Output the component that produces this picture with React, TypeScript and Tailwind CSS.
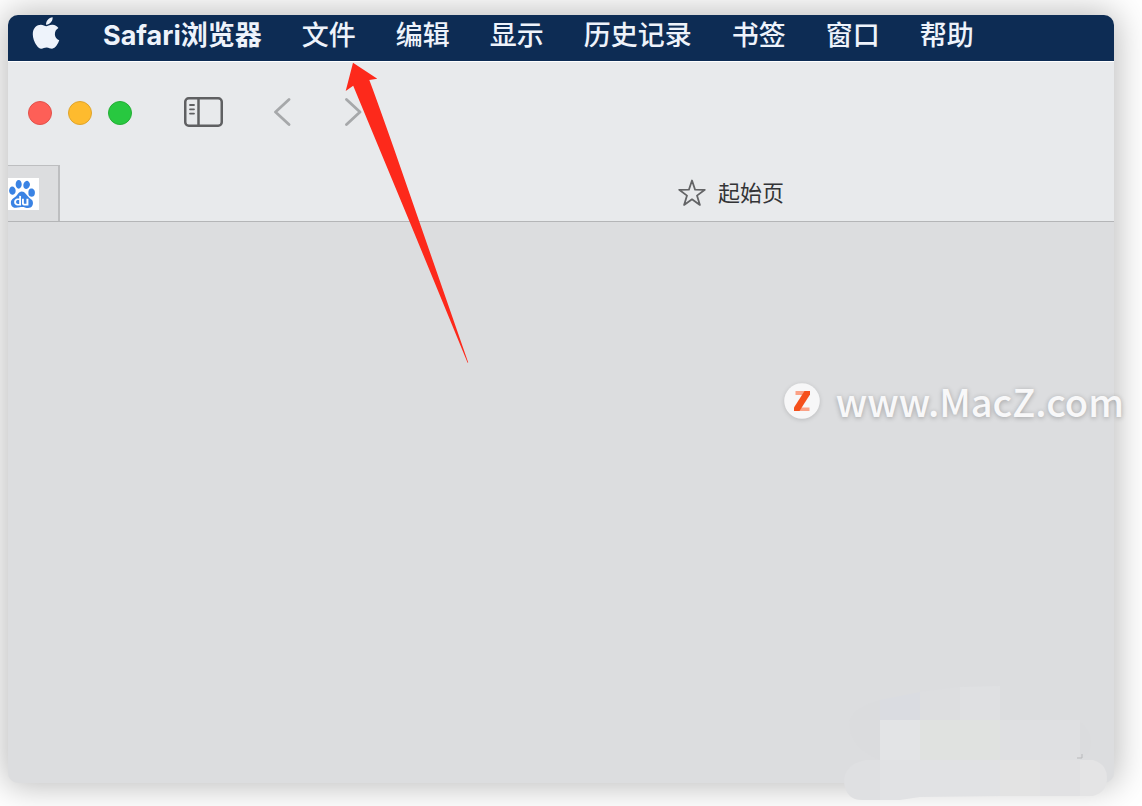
import React from "react";
import { FaApple } from "react-icons/fa";
import { SiBaidu } from "react-icons/si";

const menus = ["文件", "编辑", "显示", "历史记录", "书签", "窗口", "帮助"];

const MenuBar = () => {
    return (
        <nav className="flex h-[46px] shrink-0 items-start gap-10 overflow-hidden rounded-t-[10px] bg-[#0d2c54] pl-5 text-[27px] leading-[42px] font-medium whitespace-nowrap text-[#eef3fb]">
            <button aria-label="Apple" className="-mr-px h-9 w-9 shrink-0">
                <FaApple className="h-9 w-9" />
            </button>
            <button className="font-bold">Safari浏览器</button>
            {menus.map((name) => (
                <button key={name}>{name}</button>
            ))}
        </nav>
    )
}

const Toolbar = () => {
    return (
        <div className="flex h-[103px] items-center pb-0.5 pl-5">
            <div className="flex gap-4">
                <button aria-label="关闭" className="h-6 w-6 rounded-full border border-[#e2514b] bg-[#fe5f57]"></button>
                <button aria-label="最小化" className="h-6 w-6 rounded-full border border-[#dfa42c] bg-[#febb2e]"></button>
                <button aria-label="缩放" className="h-6 w-6 rounded-full border border-[#24ae35] bg-[#28c840]"></button>
            </div>
            <button aria-label="边栏" className="ml-[52px] pb-0.5">
                <svg className="h-[30px] w-[39px]" viewBox="0 0 39 30" fill="none" stroke="#5f6062" strokeLinecap="round">
                    <rect x="1.25" y="1.25" width="36.5" height="27.5" rx="3.5" strokeWidth="2.5" />
                    <path d="M14.5 1.5v27" strokeWidth="2.5" />
                    <path d="M6 8h4M6 12.3h4M6 16.6h4" strokeWidth="1.8" />
                </svg>
            </button>
            <button aria-label="后退" className="ml-[51px] pb-0.5">
                <svg className="h-7 w-[17px]" viewBox="0 0 17 28" fill="none" stroke="#a6a8aa" strokeWidth="2.8" strokeLinecap="round" strokeLinejoin="round">
                    <path d="M15 1.5L1.5 14L15 26.5" />
                </svg>
            </button>
            <button aria-label="前进" className="ml-[54px] pb-0.5">
                <svg className="h-7 w-[17px]" viewBox="0 0 17 28" fill="none" stroke="#a6a8aa" strokeWidth="2.8" strokeLinecap="round" strokeLinejoin="round">
                    <path d="M1.5 1.5L15 14L1.5 26.5" />
                </svg>
            </button>
        </div>
    )
}

const Tabs = () => {
    return (
        <div className="flex h-[57px] overflow-hidden border-b border-[#b4b5b7]">
            <button aria-label="百度" className="flex w-[52px] shrink-0 items-center border-t border-r-2 border-[#bdbec0] bg-[#dcdddf]">
                <span className="flex h-8 w-[31px] items-center bg-white">
                    <SiBaidu className="h-7 w-7 text-[#3a83e4]" />
                </span>
            </button>
            {/* the active tab runs past the right edge of the window */}
            <button className="flex w-[calc(100%+236px)] shrink-0 items-center justify-center gap-3 text-[22px] leading-8 text-[#333436]">
                <svg className="h-7 w-7" viewBox="0 0 28 28" fill="none" stroke="#636466" strokeWidth="1.8" strokeLinejoin="round">
                    <path d="M14 1.5l3.1 9.2 9.7.1-7.8 5.8 2.9 9.3L14 20.3l-7.9 5.6L9 16.6 1.2 10.8l9.7-.1z" />
                </svg>
                起始页
            </button>
        </div>
    )
}

const Arrow = () => {
    return (
        <svg className="pointer-events-none absolute top-[62px] left-[345px] h-[302px] w-[125px]" viewBox="345 62 125 302" fill="#fd291b">
            <path d="M353 62.7L377.3 78.7L369.3 80Q374 92 393.4 147L468.2 362.5L467.6 362.7L409.7 222L353.2 85.7L345.7 91z" />
        </svg>
    )
}

const Watermark = () => {
    return (
        <div className="pointer-events-none absolute top-[383px] right-[18px] flex items-center gap-4">
            <svg className="h-9 w-9 drop-shadow-sm" viewBox="0 0 36 36">
                <circle cx="18" cy="18" r="17.8" fill="#f7f7f8" />
                <path d="M11.500 8h14v4h-14z" fill="#fba186" />
                <path d="M10.500 24.500h15v3.500h-15z" fill="#fba186" />
                <path d="M20.500 8h5.500v3.500L15.500 28h-5.500v-3.500z" fill="#f5501c" />
            </svg>
            <span className="text-[38px] leading-9 font-medium text-[#f8f8f9] [text-shadow:0_1px_5px_rgba(0,0,0,0.28)]">www.MacZ.com</span>
        </div>
    )
}

const Mosaic = () => {
    return (
        <svg className="pointer-events-none absolute right-[35px] bottom-[6px] h-[115px] w-[264px]" viewBox="843 685 264 115">
            <path d="M880 760q-25-10-30-30t30-30z" fill="#dbdcde" />
            <path d="M880 700l40-8v28h-40z" fill="#dadce1" />
            <path d="M920 692l40-5v33h-40z" fill="#dddee0" />
            <path d="M960 687l40-1v34h-40z" fill="#dfe0e2" />
            <path d="M880 720h40v40h-40z" fill="#e3e4e6" />
            <path d="M920 720h80v40h-80z" fill="#e0e2e0" />
            <path d="M1000 720h80v40h-80z" fill="#dfe0e2" />
            <path d="M1080 722q11 8 11 20t-9 17h-2z" fill="#dbdcde" />
            <path d="M880 760h-14q-22 4-22 22 2 18 18 18h18z" fill="#dfe0e2" />
            <path d="M880 760h40v37l-20 3h-20z" fill="#e1e2e4" />
            <path d="M920 760h80v36l-80 1z" fill="#e1e2e4" />
            <path d="M1000 760h40v36h-40z" fill="#e3e3e3" />
            <path d="M1040 760h40v36h-40z" fill="#e1e1e3" />
            <path d="M1080 760h13q14 4 14 18t-14 18h-13z" fill="#e4e4e5" />
            <path d="M1077 758h5M1082 754v4" stroke="#b8b9bb" />
        </svg>
    )
}

const App = () => {
    return (
        <main className="relative flex min-h-screen flex-col overflow-hidden bg-white pt-[15px] pr-7 pb-[23px] pl-2 font-['Inter','Noto_Sans_CJK_SC',sans-serif]">
            <div className="flex grow flex-col rounded-[10px] bg-[#dcdddf] shadow-[0_0_34px_3px_rgba(0,0,0,0.28)]">
                <MenuBar />
                <div className="border-t border-white bg-[#e8eaec]">
                    <Toolbar />
                    <Tabs />
                </div>
            </div>
            <Mosaic />
            <div className="font-['Noto_Sans_CJK_SC',sans-serif]">
                <Watermark />
            </div>
            <Arrow />
        </main>
    )
}

export default App;
